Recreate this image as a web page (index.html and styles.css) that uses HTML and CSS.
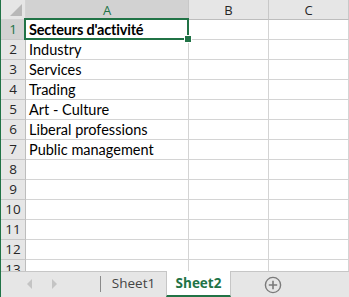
FILE: index.html
```html
<!DOCTYPE html>
<html lang="fr">
<head>
  <meta charset="UTF-8" />
  <title>Sheet2</title>
  <link rel="stylesheet" href="styles.css">
</head>
<body>
  <div class="book">
    <div class="sheet">
      <div class="corner"><div class="corner-mark"></div></div>
      <div class="col-head selected">A</div>
      <div class="col-head">B</div>
      <div class="col-head">C</div>

      <div class="row-head selected">1</div>
      <div class="cell title">Secteurs d'activité<div class="selection"><div class="handle"></div></div></div>
      <div class="cell"></div><div class="cell"></div>

      <div class="row-head">2</div><div class="cell">Industry</div><div class="cell"></div><div class="cell"></div>
      <div class="row-head">3</div><div class="cell">Services</div><div class="cell"></div><div class="cell"></div>
      <div class="row-head">4</div><div class="cell">Trading</div><div class="cell"></div><div class="cell"></div>
      <div class="row-head">5</div><div class="cell">Art - Culture</div><div class="cell"></div><div class="cell"></div>
      <div class="row-head">6</div><div class="cell">Liberal professions</div><div class="cell"></div><div class="cell"></div>
      <div class="row-head">7</div><div class="cell">Public management</div><div class="cell"></div><div class="cell"></div>
      <div class="row-head">8</div><div class="cell"></div><div class="cell"></div><div class="cell"></div>
      <div class="row-head">9</div><div class="cell"></div><div class="cell"></div><div class="cell"></div>
      <div class="row-head">10</div><div class="cell"></div><div class="cell"></div><div class="cell"></div>
      <div class="row-head">11</div><div class="cell"></div><div class="cell"></div><div class="cell"></div>
      <div class="row-head">12</div><div class="cell"></div><div class="cell"></div><div class="cell"></div>
      <div class="row-head">13</div><div class="cell"></div><div class="cell"></div><div class="cell"></div>
    </div>

    <div class="tabs">
      <div class="nav">
        <span class="arrow left"></span>
        <span class="arrow right"></span>
      </div>
      <div class="tab">Sheet1</div>
      <div class="tab active">Sheet2</div>
      <div class="add">
        <svg width="18" height="18" viewBox="0 0 18 18">
          <circle cx="9" cy="9" r="7.6" fill="none" stroke="#7a7a7a" stroke-width="1.4"/>
          <path d="M9 4.8v8.4M4.8 9h8.4" stroke="#7a7a7a" stroke-width="1.6"/>
        </svg>
      </div>
    </div>
  </div>
</body>
</html>
```

FILE: styles.css
```css
body {
  margin: 0;
  background: #ffffff;
  font-family: Lato, 'Open Sans', sans-serif;
}

.book {
  width: 349px;
  height: 297px;
  border-left: 1px solid #217346;
  box-sizing: border-box;
  display: flex;
  flex-direction: column;
  overflow: hidden;
}

.sheet {
  display: grid;
  grid-template-columns: 25px 163px 80px 80px;
  grid-auto-rows: 20px;
  height: 271px;
  overflow: hidden;
  flex-shrink: 0;
}

.sheet > div {
  box-sizing: border-box;
  border-right: 1px solid #d4d4d4;
  border-bottom: 1px solid #d4d4d4;
}

.corner {
  background: #e6e6e6;
  position: relative;
}

.corner-mark {
  position: absolute;
  right: 3px;
  bottom: 3px;
  width: 0;
  height: 0;
  border-left: 12px solid transparent;
  border-bottom: 12px solid #b8b8b8;
}

.col-head {
  background: #e6e6e6;
  color: #262626;
  font-family: 'Open Sans', sans-serif;
  font-size: 13px;
  text-align: center;
  line-height: 20px;
  border-right-color: #c8c8c8 !important;
  border-bottom-color: #bdbdbd !important;
}

.row-head {
  background: #e6e6e6;
  color: #262626;
  font-family: 'Open Sans', sans-serif;
  font-size: 13.5px;
  text-align: center;
  line-height: 19px;
  border-right-color: #bdbdbd !important;
  border-bottom-color: #c8c8c8 !important;
}

.col-head.selected,
.row-head.selected {
  background: #d2d2d2;
  color: #217346;
}

.cell {
  font-size: 14.5px;
  line-height: 20px;
  padding-left: 3px;
  color: #000000;
  white-space: nowrap;
}

.title {
  font-weight: bold;
  letter-spacing: -0.2px;
  position: relative;
}

.selection {
  position: absolute;
  left: -2px;
  top: -2px;
  width: 165px;
  height: 22px;
  border: 2px solid #217346;
  box-sizing: border-box;
}

.handle {
  position: absolute;
  right: -5px;
  bottom: -5px;
  width: 6px;
  height: 6px;
  background: #217346;
  border: 1px solid #ffffff;
}

.tabs {
  flex: 1;
  display: flex;
  background: #e6e6e6;
  border-top: 1px solid #c6c6c6;
}

.nav {
  width: 100px;
  display: flex;
  align-items: center;
  gap: 20px;
  padding-left: 26px;
  box-sizing: border-box;
  border-right: 1px solid #8a8a8a;
  margin: 4px 0 5px;
}

.arrow {
  width: 0;
  height: 0;
  border-top: 5px solid transparent;
  border-bottom: 5px solid transparent;
}

.arrow.left {
  border-right: 5px solid #c4c4c4;
}

.arrow.right {
  border-left: 5px solid #c4c4c4;
}

.tab {
  width: 65px;
  font-family: 'Open Sans', sans-serif;
  font-size: 13.5px;
  color: #444444;
  text-align: center;
  line-height: 25px;
  margin-top: -1px;
}

.tab.active {
  background: #ffffff;
  color: #217346;
  font-weight: bold;
  border-left: 1px solid #c6c6c6;
  border-right: 1px solid #c6c6c6;
  border-bottom: 2px solid #217346;
  box-sizing: border-box;
  line-height: 24px;
}

.add {
  width: 84px;
  display: flex;
  align-items: center;
  justify-content: center;
}
```
